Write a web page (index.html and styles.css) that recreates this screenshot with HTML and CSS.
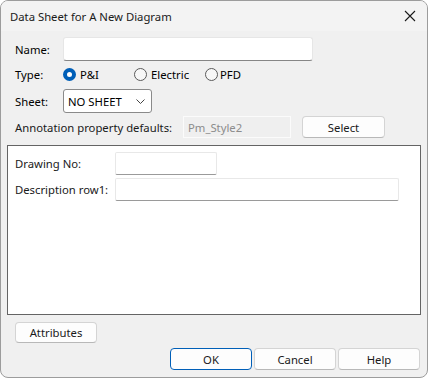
FILE: index.html
```html
<!DOCTYPE html>
<html>
<head>
<meta charset="utf-8">
<link rel="stylesheet" href="styles.css">
</head>
<body>
<div class="window">
  <div class="titlebar">
    <span class="title">Data Sheet for A New Diagram</span>
    <svg class="close" width="12" height="12" viewBox="0 0 12 12"><path d="M1 1L11 11M11 1L1 11" stroke="#1a1a1a" stroke-width="1.1" fill="none"/></svg>
  </div>
  <div class="content">
    <div class="row row-name">
      <span class="label">Name:</span>
      <div class="input name-input"></div>
    </div>
    <div class="row row-type">
      <span class="label">Type:</span>
      <div class="radios">
        <div class="radio-opt"><span class="radio checked"></span><span>P&amp;I</span></div>
        <div class="radio-opt"><span class="radio"></span><span>Electric</span></div>
        <div class="radio-opt"><span class="radio"></span><span>PFD</span></div>
      </div>
    </div>
    <div class="row row-sheet">
      <span class="label">Sheet:</span>
      <div class="select"><span>NO SHEET</span>
        <svg width="9" height="5" viewBox="0 0 9 5"><path d="M0.5 0.5L4.5 4.5L8.5 0.5" stroke="#444" stroke-width="1" fill="none"/></svg>
      </div>
    </div>
    <div class="row row-annot">
      <span class="label-wide">Annotation property defaults:</span>
      <div class="disabled-field">Pm_Style2</div>
      <div class="btn btn-select">Select</div>
    </div>
    <div class="group">
      <div class="grow grow-first">
        <span class="glabel">Drawing No:</span>
        <div class="ginput short"></div>
      </div>
      <div class="grow">
        <span class="glabel">Description row1:</span>
        <div class="ginput long"></div>
      </div>
    </div>
    <div class="attr-row">
      <div class="btn">Attributes</div>
    </div>
    <div class="footer">
      <div class="btn btn-ok">OK</div>
      <div class="btn">Cancel</div>
      <div class="btn">Help</div>
    </div>
  </div>
</div>
</body>
</html>
```
FILE: styles.css
```css
* { box-sizing: border-box; }
html, body { margin: 0; padding: 0; background: #ffffff; }
body {
  font-family: "Noto Sans", "Liberation Sans", sans-serif;
  font-size: 11.3px;
  color: #000;
}
.window {
  width: 428px;
  height: 378px;
  border: 1px solid #9c9c9c;
  border-radius: 8px;
  background: #f0f0f0;
  overflow: hidden;
  display: flex;
  flex-direction: column;
}
.titlebar {
  height: 30px;
  background: #f3f3f3;
  display: flex;
  align-items: center;
  justify-content: space-between;
  padding: 0 11px 0 9px;
  flex: none;
}
.title { font-size: 11.3px; color: #1a1a1a; }
.close { display: block; }
.content {
  display: flex;
  flex-direction: column;
  padding: 0 0 0 14px;
}
.row { display: flex; align-items: center; }
.label { width: 48px; flex: none; }
.row-name { margin-top: 6px; height: 24px; }
.input {
  background: #fff;
  border: 1px solid #e6e6e6;
  border-bottom-color: #868686;
  border-radius: 3px;
  height: 24px;
}
.name-input { width: 250px; }
.row-type { margin-top: 2px; height: 22px; }
.radios { display: flex; }
.radio-opt { width: 71px; display: flex; align-items: center; gap: 4px; }
.radio-opt:last-child { gap: 2px; }
.radio {
  width: 13px; height: 13px; border-radius: 50%;
  border: 1px solid #5a5a5a;
  background: #f7f7f7;
  flex: none;
}
.radio.checked {
  border: 4px solid #005fb8;
  background: #fff;
}
.row-sheet { margin-top: 4px; height: 24px; }
.select {
  width: 89px; height: 24px;
  background: #fff;
  border: 1px solid #8a8a8a;
  border-radius: 3px;
  display: flex;
  align-items: center;
  justify-content: space-between;
  padding: 0 6px 0 4px;
}
.row-annot { margin-top: 3px; height: 22px; }
.label-wide { width: 168px; flex: none; color: #1a1a1a; }
.disabled-field {
  width: 108px; height: 22px;
  background: #efefef;
  border: 1px solid #fbfbfb;
  color: #8c8c8c;
  padding-left: 4px;
  display: flex; align-items: center;
}
.btn {
  width: 82px; height: 22px;
  background: #fdfdfd;
  border: 1px solid #d4d4d4;
  border-bottom-color: #b8b8b8;
  border-radius: 4px;
  display: flex; align-items: center; justify-content: center;
  color: #1a1a1a;
}
.btn-select { margin-left: 11px; width: 83px; }
.group {
  margin: 7px 0 0 -8px;
  width: 414px;
  height: 170px;
  border: 1px solid #646464;
  background: #fff;
  padding: 6px 0 0 7px;
  display: flex; flex-direction: column; gap: 3px;
}
.grow { display: flex; align-items: center; height: 23px; }
.glabel { width: 100px; flex: none; color: #1a1a1a; }
.ginput {
  height: 23px;
  background: #fff;
  border: 1px solid #e8e8e8;
  border-bottom-color: #9a9a9a;
  border-radius: 2px;
}
.ginput.short { width: 102px; }
.ginput.long { width: 284px; }
.attr-row { margin-top: 7px; display: flex; }
.attr-row .btn { height: 21px; }
.footer {
  margin-top: 5px;
  display: flex;
  justify-content: flex-end;
  gap: 2px;
  padding-right: 7px;
}
.footer .btn { height: 22px; }
.btn-ok { border: 1px solid #005fb8; }
```
